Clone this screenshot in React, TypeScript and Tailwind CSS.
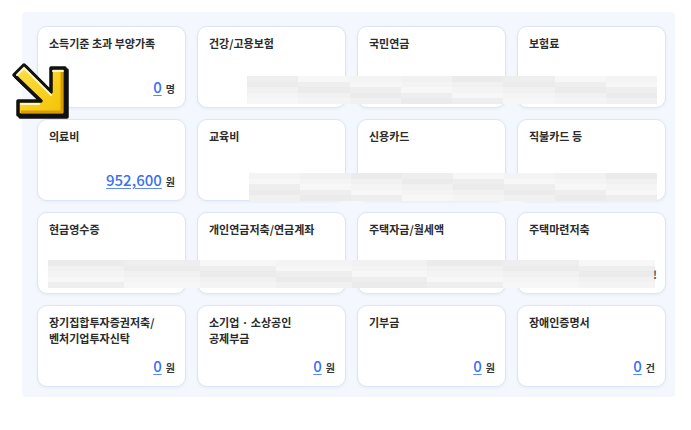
import React from 'react';

type Card = { title: string[]; value?: string; unit?: string };

const cards: Card[] = [
    { title: ['소득기준 초과 부양가족'], value: '0', unit: '명' },
    { title: ['건강/고용보험'] },
    { title: ['국민연금'] },
    { title: ['보험료'] },
    { title: ['의료비'], value: '952,600', unit: '원' },
    { title: ['교육비'] },
    { title: ['신용카드'] },
    { title: ['직불카드 등'] },
    { title: ['현금영수증'] },
    { title: ['개인연금저축/연금계좌'] },
    { title: ['주택자금/월세액'] },
    { title: ['주택마련저축'] },
    { title: ['장기집합투자증권저축/', '벤처기업투자신탁'], value: '0', unit: '원' },
    { title: ['소기업 · 소상공인', '공제부금'], value: '0', unit: '원' },
    { title: ['기부금'], value: '0', unit: '원' },
    { title: ['장애인증명서'], value: '0', unit: '건' },
];

// redacted strips: left, top, width, column count
const strips = [
    { left: 247, top: 76, width: 410, cols: 8 },
    { left: 249, top: 173, width: 408, cols: 8 },
    { left: 48, top: 260, width: 607, cols: 8 },
];

const shades = ['#eeeeee', '#f4f4f4', '#ebebeb', '#f7f7f7', '#f1f1f1'];

function Mosaic({ left, top, width, cols, seed }: { left: number; top: number; width: number; cols: number; seed: number }) {
    return (
        <div className="absolute flex h-[28px]" style={{ left, top, width }}>
            {Array.from({ length: cols }).map((_, c) => (
                <div key={c} className="flex-1 flex flex-col">
                    {Array.from({ length: 5 }).map((_, r) => (
                        <div key={r} className="flex-1" style={{ background: shades[(c * 3 + r * 2 + seed) % shades.length] }} />
                    ))}
                </div>
            ))}
        </div>
    );
}

function Arrow() {
    return (
        <svg className="absolute left-[5px] top-[55px]" width="75" height="70" viewBox="0 0 75 70">
            <defs>
                <linearGradient id="arrowFill" x1="0" y1="0" x2="1" y2="1">
                    <stop offset="0" stopColor="#ffe14a" />
                    <stop offset="1" stopColor="#f2c200" />
                </linearGradient>
            </defs>
            <polygon points="11,22 21,12 48,39 48,15 62,15 62,62 15,62 15,48 38,48" fill="#2a2000" stroke="#111" strokeWidth="3.5" strokeLinejoin="round" />
            <polygon points="9,20 19,10 46,37 46,13 60,13 60,60 13,60 13,46 36,46" fill="url(#arrowFill)" stroke="#111" strokeWidth="3.5" strokeLinejoin="round" />
            <polyline points="12,20 19,13 46,40" fill="none" stroke="#fff8c8" strokeWidth="2" strokeLinecap="round" />
            <polyline points="48,16 58,16" fill="none" stroke="#fff8c8" strokeWidth="2" strokeLinecap="round" />
            <polyline points="16,49 34,49" fill="none" stroke="#fff8c8" strokeWidth="2" strokeLinecap="round" />
            <polyline points="57,17 57,57 16,57" fill="none" stroke="#d99c00" strokeWidth="3" strokeLinejoin="round" />
        </svg>
    );
}

export default function App() {
    return (
        <div className="relative w-[691px] h-[430px] bg-white overflow-hidden" style={{ fontFamily: '"Noto Sans CJK KR", "Noto Sans", sans-serif' }}>
            <div className="ml-[22px] mt-[12px] w-[653px] h-[385px] rounded-[4px] bg-[#f4f7fd] pt-[14px] pl-[15px] pr-[9px]">
                <div className="grid grid-cols-[repeat(4,149px)] gap-x-[11px] gap-y-[11px]">
                    {cards.map((card, i) => (
                        <div
                            key={i}
                            className="h-[82px] rounded-[10px] border border-[#dde5f6] bg-white shadow-[0_1px_3px_rgba(70,100,170,0.08)] pt-[8px] pl-[11px] pr-[10px] pb-[10px] flex flex-col justify-between"
                        >
                            <div className="text-[11px] leading-[16px] font-bold text-[#2b2b2b]">
                                {card.title.map((t, j) => (
                                    <div key={j}>{t}</div>
                                ))}
                            </div>
                            {card.value && (
                                <div className="flex items-baseline justify-end gap-[4px]">
                                    <span className="text-[15px] leading-[20px] font-medium text-[#3a70f0] underline underline-offset-[2px] decoration-[#5b8af3]">
                                        {card.value}
                                    </span>
                                    <span className="text-[10px] font-bold text-[#333]">{card.unit}</span>
                                </div>
                            )}
                        </div>
                    ))}
                </div>
            </div>

            {strips.map((s, i) => (
                <Mosaic key={i} {...s} seed={i} />
            ))}
            <span className="absolute left-[653px] top-[266px] text-[11px] font-bold text-[#555]">!</span>

            <Arrow />
        </div>
    );
}
